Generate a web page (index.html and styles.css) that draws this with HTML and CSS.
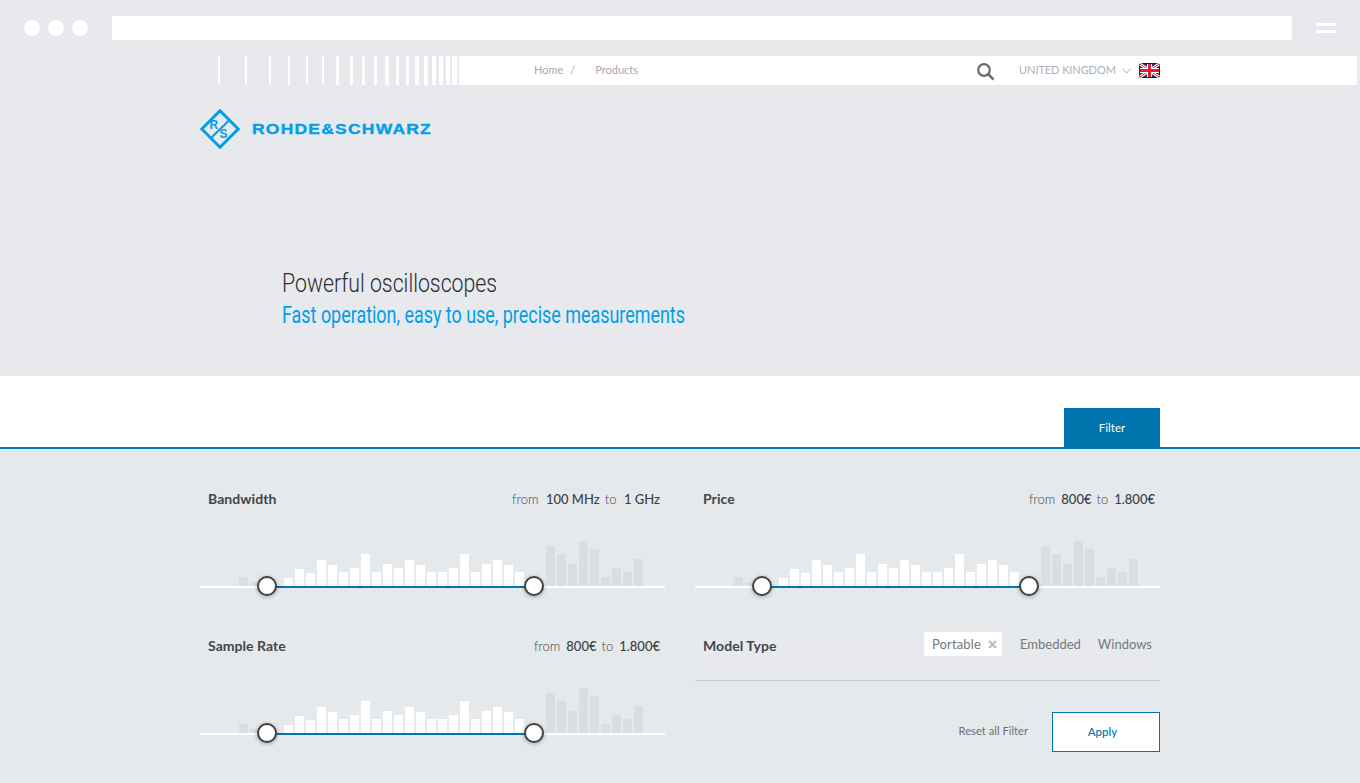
FILE: index.html
```html
<!DOCTYPE html>
<html lang="en">
<head>
<meta charset="utf-8">
<title>Powerful oscilloscopes</title>
<link rel="stylesheet" href="styles.css">
</head>
<body>
<div class="browser">
  <div class="dots"><span class="dot"></span><span class="dot"></span><span class="dot"></span></div>
  <div class="urlbar"></div>
  <div class="burger"><span></span><span></span></div>
</div>
<div class="navrow">
  <svg class="stripes" width="241" height="29" viewBox="0 0 241 29" fill="#fff">
    <rect x="0" width="2" height="29"/><rect x="27" width="2" height="29"/><rect x="51" width="2" height="29"/><rect x="70" width="2" height="29"/><rect x="88" width="2" height="29"/><rect x="104" width="2" height="29"/><rect x="118" width="3" height="29"/><rect x="132" width="3" height="29"/><rect x="144" width="3" height="29"/><rect x="156" width="3" height="29"/><rect x="167" width="4" height="29"/><rect x="178" width="3" height="29"/><rect x="188" width="3" height="29"/><rect x="197" width="4" height="29"/><rect x="206" width="4" height="29"/><rect x="214" width="4" height="29"/><rect x="221" width="4" height="29"/><rect x="228" width="4" height="29"/><rect x="234" width="5" height="29"/>
  </svg>
  <nav class="nav">
    <a class="crumb">Home</a><span class="sep">/</span><a class="crumb">Products</a>
    <svg class="search" width="18" height="18" viewBox="0 0 18 18" fill="none" stroke="#696c70" stroke-width="2.200"><circle cx="7" cy="7" r="5.800"/><path d="M11.200 11.200 L16.600 16.600" stroke-width="2.600"/></svg>
    <span class="country">UNITED KINGDOM</span>
    <svg class="chev" width="9" height="6" viewBox="0 0 9 6" fill="none" stroke="#c6c9cc" stroke-width="1.200"><path d="M.5 .8 L4.5 4.8 L8.5 .8"/></svg>
    <svg class="flag" width="21" height="15" viewBox="0 0 21 15">
      <rect x=".5" y=".5" width="20" height="14" rx="1.5" fill="#27306b" stroke="#1d2030"/>
      <path d="M1 1 L20 14 M20 1 L1 14" stroke="#fff" stroke-width="3"/>
      <path d="M1 1 L20 14 M20 1 L1 14" stroke="#e0202f" stroke-width="1"/>
      <path d="M10.500 1 V14 M1 7.500 H20" stroke="#fff" stroke-width="5"/>
      <path d="M10.500 1 V14 M1 7.500 H20" stroke="#e0202f" stroke-width="3"/>
    </svg>
  </nav>
</div>
<header class="hero">
  <svg class="logo" width="233" height="40" viewBox="0 0 233 40">
    <path d="M20 1.800 L38.200 20 L20 38.200 L1.800 20 Z" fill="none" stroke="#009fe8" stroke-width="3"/>
    <path d="M30 10.500 L10 30" stroke="#009fe8" stroke-width="2"/>
    <text x="9.500" y="19.500" class="logo-rs">R</text>
    <text x="19.500" y="28.500" class="logo-rs">S</text>
    <text x="52" y="25" class="logo-word" textLength="180" lengthAdjust="spacingAndGlyphs">ROHDE&amp;SCHWARZ</text>
  </svg>
  <h1 class="hero-title">Powerful oscilloscopes</h1>
  <p class="hero-sub">Fast operation, easy to use, precise measurements</p>
</header>
<div class="tabs"><button class="tab">Filter</button></div>
<main class="panel">
  <section class="filter">
    <div class="head"><strong class="label">Bandwidth</strong><span class="range-text">from <b class="wide">100 MHz</b> to <b class="wide">1 GHz</b></span></div>
    <div class="slider">
      <div class="hist">
        <i class="out" style="height:9px"></i><i class="out" style="height:4px"></i>
        <i class="first" style="height:8px"></i><i style="height:17px"></i><i style="height:13px"></i><i style="height:26px"></i><i style="height:21px"></i><i style="height:14px"></i><i style="height:18px"></i><i style="height:32px"></i><i style="height:14px"></i><i style="height:22px"></i><i style="height:18px"></i><i style="height:26px"></i><i style="height:21px"></i><i style="height:14px"></i><i style="height:14px"></i><i style="height:18px"></i><i style="height:32px"></i><i style="height:14px"></i><i style="height:22px"></i><i style="height:26px"></i><i style="height:21px"></i><i style="height:14px"></i>
        <i class="out after" style="height:40px"></i><i class="out" style="height:32px"></i><i class="out" style="height:22px"></i><i class="out" style="height:45px"></i><i class="out" style="height:37px"></i><i class="out" style="height:9px"></i><i class="out" style="height:18px"></i><i class="out" style="height:14px"></i><i class="out" style="height:27px"></i>
      </div>
      <div class="track"><span class="range"></span><span class="knob knob-a"></span><span class="knob knob-b"></span></div>
    </div>
  </section>
  <section class="filter">
    <div class="head"><strong class="label">Price</strong><span class="range-text">from <b>800€</b> to <b>1.800€</b></span></div>
    <div class="slider">
      <div class="hist">
        <i class="out" style="height:9px"></i><i class="out" style="height:4px"></i>
        <i class="first" style="height:8px"></i><i style="height:17px"></i><i style="height:13px"></i><i style="height:26px"></i><i style="height:21px"></i><i style="height:14px"></i><i style="height:18px"></i><i style="height:32px"></i><i style="height:14px"></i><i style="height:22px"></i><i style="height:18px"></i><i style="height:26px"></i><i style="height:21px"></i><i style="height:14px"></i><i style="height:14px"></i><i style="height:18px"></i><i style="height:32px"></i><i style="height:14px"></i><i style="height:22px"></i><i style="height:26px"></i><i style="height:21px"></i><i style="height:14px"></i>
        <i class="out after" style="height:40px"></i><i class="out" style="height:32px"></i><i class="out" style="height:22px"></i><i class="out" style="height:45px"></i><i class="out" style="height:37px"></i><i class="out" style="height:9px"></i><i class="out" style="height:18px"></i><i class="out" style="height:14px"></i><i class="out" style="height:27px"></i>
      </div>
      <div class="track"><span class="range"></span><span class="knob knob-a"></span><span class="knob knob-b"></span></div>
    </div>
  </section>
  <section class="filter">
    <div class="head"><strong class="label">Sample Rate</strong><span class="range-text">from <b>800€</b> to <b>1.800€</b></span></div>
    <div class="slider">
      <div class="hist">
        <i class="out" style="height:9px"></i><i class="out" style="height:4px"></i>
        <i class="first" style="height:8px"></i><i style="height:17px"></i><i style="height:13px"></i><i style="height:26px"></i><i style="height:21px"></i><i style="height:14px"></i><i style="height:18px"></i><i style="height:32px"></i><i style="height:14px"></i><i style="height:22px"></i><i style="height:18px"></i><i style="height:26px"></i><i style="height:21px"></i><i style="height:14px"></i><i style="height:14px"></i><i style="height:18px"></i><i style="height:32px"></i><i style="height:14px"></i><i style="height:22px"></i><i style="height:26px"></i><i style="height:21px"></i><i style="height:14px"></i>
        <i class="out after" style="height:40px"></i><i class="out" style="height:32px"></i><i class="out" style="height:22px"></i><i class="out" style="height:45px"></i><i class="out" style="height:37px"></i><i class="out" style="height:9px"></i><i class="out" style="height:18px"></i><i class="out" style="height:14px"></i><i class="out" style="height:27px"></i>
      </div>
      <div class="track"><span class="range"></span><span class="knob knob-a"></span><span class="knob knob-b"></span></div>
    </div>
  </section>
  <section class="filter">
    <div class="model">
      <strong class="label">Model Type</strong>
      <div class="chips">
        <span class="chip active">Portable<svg class="x" width="9" height="9" viewBox="0 0 9 9" stroke="#b9c1c9" stroke-width="2.400"><path d="M1 1 L8 8 M8 1 L1 8"/></svg></span>
        <span class="chip">Embedded</span>
        <span class="chip">Windows</span>
      </div>
    </div>
    <div class="actions">
      <a class="reset">Reset all Filter</a>
      <button class="apply">Apply</button>
    </div>
  </section>
</main>
</body>
</html>
```
FILE: styles.css
```css
* { box-sizing: border-box; }
html, body { margin: 0; padding: 0; }
body {
  width: 1360px;
  height: 783px;
  overflow: hidden;
  background: #e8e9ed;
  font-family: Lato, "Liberation Sans", sans-serif;
  color: #43464a;
}
.browser { display: flex; height: 56px; padding: 16px 24px 0; }
.dots { display: flex; gap: 8px; margin-top: 4px; }
.dot { width: 16px; height: 16px; border-radius: 50%; background: #fff; }
.urlbar { width: 1180px; height: 24px; margin-left: 24px; background: #fff; }
.burger { display: flex; flex-direction: column; gap: 4px; width: 20px; margin: 7px 0 0 24px; }
.burger span { height: 3px; background: #fff; border-radius: 1px; }

.navrow { display: flex; height: 29px; padding-left: 218px; }
.stripes { display: block; flex: none; }
.nav {
  display: flex; align-items: center; width: 898px; height: 29px;
  padding: 0 0 2px 75px; background: #fff;
  font-size: 11px; color: #a6a9ad;
}
.sep { margin: 0 20px 0 7px; }
.search { margin-left: 339px; margin-top: 4px; }
.country { margin-left: 24px; color: #aeb1b5; letter-spacing: -.08px; }
.chev { margin-left: 6px; margin-top: 3px; }
.flag { margin-left: 8px; margin-top: 2px; }

.hero { height: 291px; padding: 24px 0 0 200px; }
.logo { display: block; }
.logo-rs { font: 700 12px "Liberation Sans", sans-serif; fill: #009fe8; }
.logo-word { font: 700 14px "Liberation Sans", sans-serif; letter-spacing: 1px; fill: #009fe8; stroke: #009fe8; stroke-width: .35px; }
.hero-title {
  margin: 116px 0 0 82px;
  font: 300 26px/36px Roboto, "Liberation Sans", sans-serif;
  color: #2a2d33;
  transform: scaleX(.818);
  transform-origin: left;
}
.hero-sub {
  margin: -1px 0 0 82px;
  font: 400 23px/32px Roboto, "Liberation Sans", sans-serif;
  color: #009fe8;
  transform: scaleX(.779);
  transform-origin: left;
}

.tabs {
  display: flex; justify-content: flex-end; height: 73px;
  padding: 32px 200px 0 0; background: #fff;
  border-bottom: 2px solid #0075ae;
}
.tab {
  width: 96px; height: 39px; border: 0; background: #0075ae;
  color: #fff; font: 400 11.500px Lato, sans-serif;
}

.panel {
  display: grid; grid-template-columns: 465px 465px; column-gap: 30px; row-gap: 48px;
  align-content: start;
  height: 334px; padding: 40px 0 0 200px; background: #e5e9ec;
}
.head { display: flex; justify-content: space-between; align-items: center; height: 20px; padding: 0 5px 2px 8px; }
.label { font-size: 14px; font-weight: 700; color: #43464a; letter-spacing: .05px; }
.range-text { margin-top: 2px; font-size: 13px; font-weight: 300; color: #3c3f43; word-spacing: 1.500px; }
.range-text b { font-weight: 500; margin-left: 1px; word-spacing: 0; }
.range-text b.wide { margin: 0 0 0 2.500px; }
.slider { margin-top: 32px; }
.hist { display: flex; align-items: flex-end; gap: 2px; height: 45px; padding-left: 39px; }
.hist i { display: block; width: 9px; background: #fff; }
.hist i.out { background: #d8dee2; }
.hist i.first { margin-left: 23px; }
.hist i.after { margin-left: 20px; }
.track { position: relative; height: 2px; background: #fff; }
.range { position: absolute; left: 67px; width: 267px; height: 2px; background: #0075ae; }
.knob {
  position: absolute; top: -10px; width: 20px; height: 20px; border-radius: 50%;
  background: #fff; border: 2px solid #3f4246; box-shadow: 0 1px 4px rgba(0,0,0,.3);
}
.knob-a { left: 57px; }
.knob-b { left: 324px; }

.model {
  display: flex; justify-content: space-between; align-items: flex-start;
  height: 48px; margin-top: -3px; padding: 0 8px;
  background: #e8e9ed; border-bottom: 1px solid #c5ccd1;
}
.model .label { margin-top: 4px; line-height: 18px; }
.chips { display: flex; gap: 17px; margin-top: -1px; font-size: 13px; color: #75787c; }
.chip { display: flex; align-items: center; height: 24px; padding-bottom: 1px; }
.chip.active { gap: 7px; padding: 0 5px 1px 8px; background: #fff; margin-right: 1px; letter-spacing: .15px; }
.x { display: block; margin-top: 1px; }
.actions { display: flex; justify-content: flex-end; align-items: center; gap: 24px; margin-top: 31px; }
.reset { font-size: 11.200px; color: #6c6f73; margin-bottom: 3px; }
.apply {
  width: 108px; height: 40px; padding: 0 7px 2px 0; background: #fff; border: 1px solid #0075ae;
  color: #0075ae; font: 500 11.500px Lato, sans-serif;
}
```
